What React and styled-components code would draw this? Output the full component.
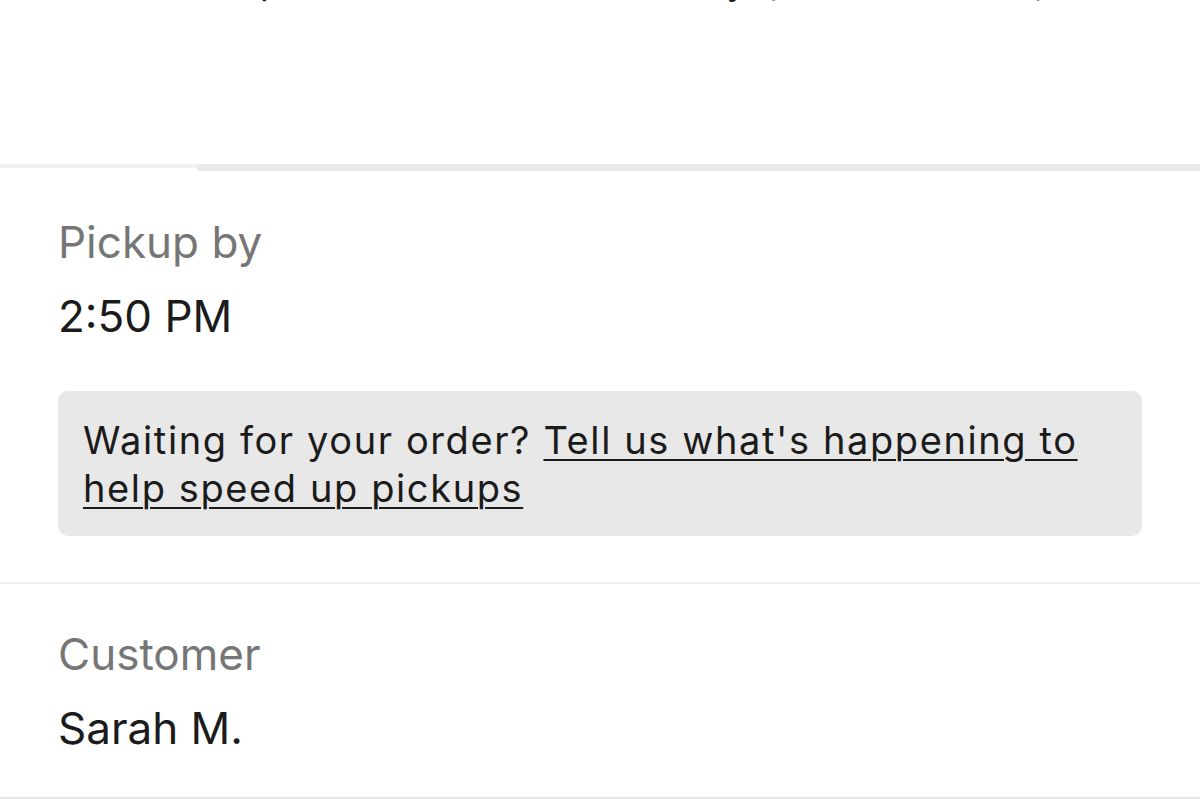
import styled, { createGlobalStyle } from 'styled-components';

const GlobalStyle = createGlobalStyle`
  html, body {
    margin: 0;
    padding: 0;
    background: #ffffff;
  }
  body {
    font-family: Inter, "Noto Sans", "Liberation Sans", sans-serif;
    color: #1b1b1b;
    overflow: hidden;
  }
`;

const Page = styled.div`
  width: 1200px;
  height: 799px;
  overflow: hidden;
  display: flex;
  flex-direction: column;
`;

const Intro = styled.p`
  margin: -44px 0 0;
  padding: 0 60px 160px;
  font-size: 38px;
  line-height: 48px;
  white-space: nowrap;
  overflow: hidden;
`;

const SplitDivider = styled.div`
  display: flex;
  align-items: flex-start;
  height: 7px;
`;

const DividerPart = styled.div`
  width: ${({ $width }) => ($width ? `${$width}px` : 'auto')};
  flex: ${({ $width }) => ($width ? 'none' : '1')};
  height: ${({ $thick }) => ($thick ? '7px' : '4px')};
  background: ${({ $thick }) => ($thick ? '#e9e9e9' : '#f1f1f1')};
`;

const Divider = styled.div`
  height: 2px;
  background: ${({ $tone }) => $tone || '#efefef'};
`;

const Section = styled.section`
  display: flex;
  flex-direction: column;
  padding: ${({ $top }) => $top}px 58px ${({ $bottom }) => $bottom}px 58px;
`;

const Label = styled.div`
  font-size: 44px;
  line-height: 52px;
  color: #767676;
`;

const Value = styled.div`
  margin-top: 22px;
  font-size: 44px;
  line-height: 52px;
  color: #1b1b1b;
`;

const Notice = styled.div`
  margin-top: 49px;
  width: 1084px;
  box-sizing: border-box;
  padding: 25px 24px 24px 25px;
  border-radius: 10px;
  background: #e8e8e8;
  font-size: 38px;
  line-height: 48px;
  letter-spacing: 1.6px;
  color: #1b1b1b;
`;

const NoticeLink = styled.a`
  color: inherit;
  text-decoration: underline;
  text-decoration-thickness: 2px;
  text-underline-offset: 5px;
`;

export default function App() {
  return (
    <>
      <GlobalStyle />
      <Page>
        <Intro>Let the shop know the order is to Tokyo, and wait here, then head out</Intro>
        <SplitDivider>
          <DividerPart $width={197} />
          <DividerPart $thick />
        </SplitDivider>
        <Section $top={45} $bottom={46}>
          <Label>Pickup by</Label>
          <Value>2:50 PM</Value>
          <Notice>
            Waiting for your order?{' '}
            <NoticeLink href="#">Tell us what's happening to help speed up pickups</NoticeLink>
          </Notice>
        </Section>
        <Divider />
        <Section $top={44} $bottom={43}>
          <Label>Customer</Label>
          <Value>Sarah M.</Value>
        </Section>
        <Divider $tone="#e6e6e6" />
      </Page>
    </>
  );
}
